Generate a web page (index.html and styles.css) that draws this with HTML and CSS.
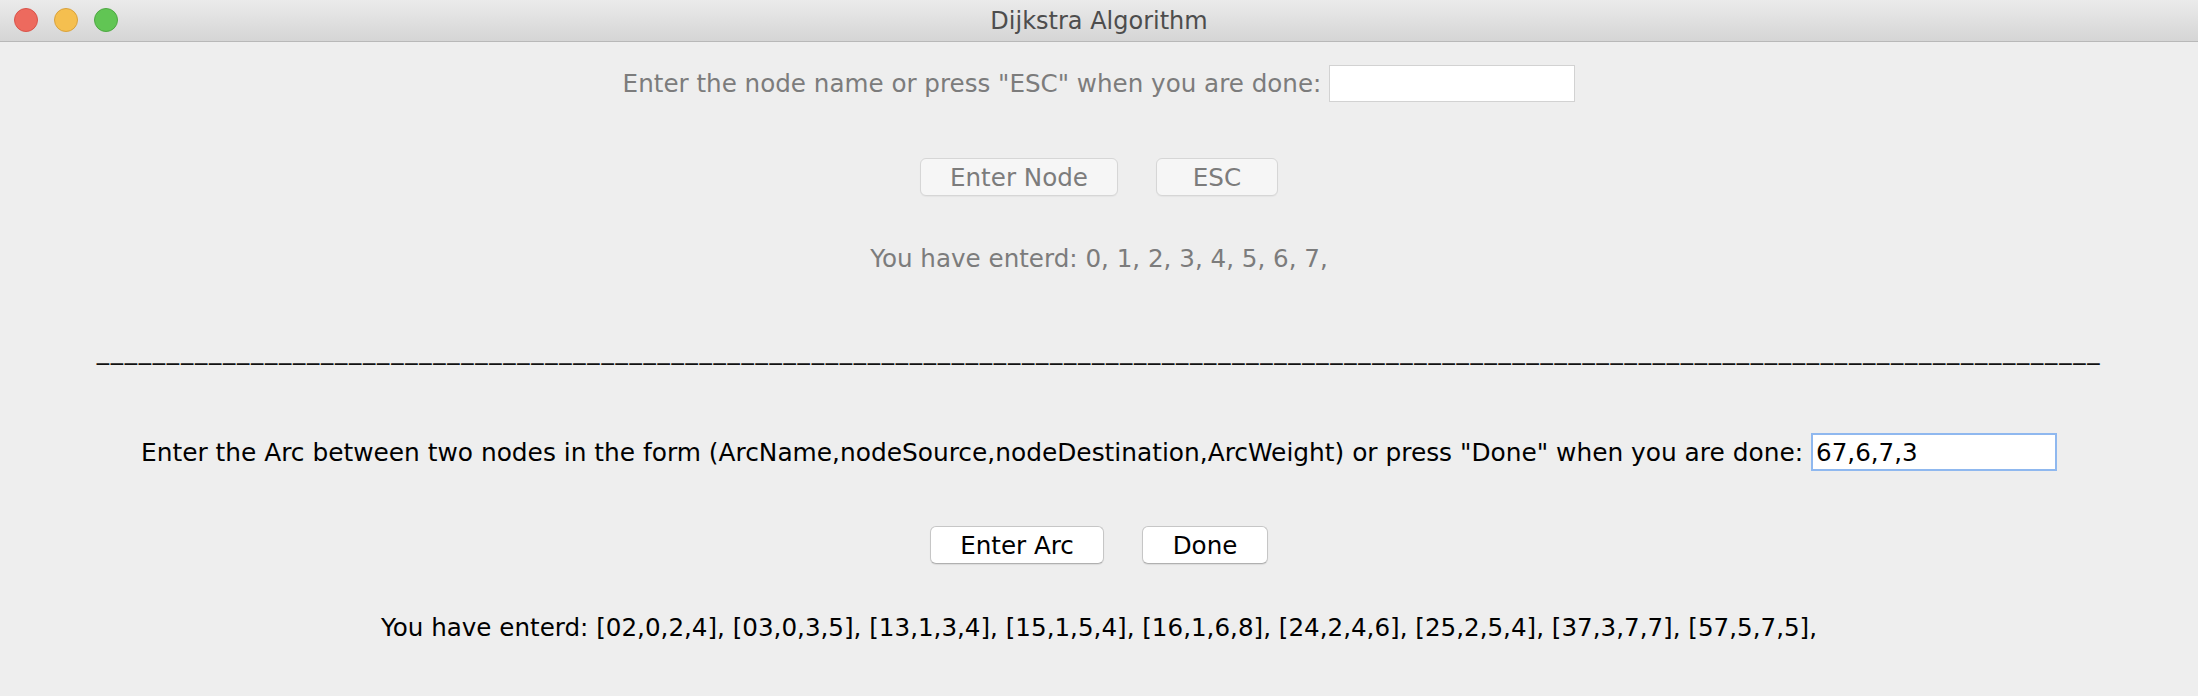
FILE: index.html
```html
<!DOCTYPE html>
<html>
<head>
<meta charset="utf-8">
<title>Dijkstra Algorithm</title>
<link rel="stylesheet" href="styles.css">
</head>
<body>
<div class="window">
  <div class="titlebar">
    <div class="lights">
      <span class="light red"></span>
      <span class="light yellow"></span>
      <span class="light green"></span>
    </div>
    <div class="title">Dijkstra Algorithm</div>
  </div>
  <div class="content">
    <div class="row row1 disabled">
      <span class="label">Enter the node name or press "ESC" when you are done:</span>
      <span class="field"></span>
    </div>
    <div class="row row2">
      <button class="btn btn-off btn-node">Enter Node</button>
      <button class="btn btn-off btn-esc">ESC</button>
    </div>
    <div class="row row3 disabled">
      <span class="label">You have enterd: 0, 1, 2, 3, 4, 5, 6, 7,</span>
    </div>
    <div class="row row4">
      <span class="sep">_______________________________________________________________________________________________________________________________________________</span>
    </div>
    <div class="row row5">
      <span class="label">Enter the Arc between two nodes in the form (ArcName,nodeSource,nodeDestination,ArcWeight) or press "Done" when you are done:</span>
      <span class="field focus">67,6,7,3</span>
    </div>
    <div class="row row6">
      <button class="btn btn-arc">Enter Arc</button>
      <button class="btn btn-done">Done</button>
    </div>
    <div class="row row7">
      <span class="label">You have enterd: [02,0,2,4], [03,0,3,5], [13,1,3,4], [15,1,5,4], [16,1,6,8], [24,2,4,6], [25,2,5,4], [37,3,7,7], [57,5,7,5],</span>
    </div>
  </div>
</div>
</body>
</html>
```

FILE: styles.css
```css
html, body {
  margin: 0;
  padding: 0;
  background: #eeeeee;
}
body {
  width: 2198px;
  height: 696px;
  overflow: hidden;
  font-family: "DejaVu Sans", "Liberation Sans", sans-serif;
  font-size: 24.6px;
  color: #000;
}
.window {
  display: flex;
  flex-direction: column;
  height: 696px;
}
.titlebar {
  height: 41px;
  border-bottom: 1px solid #b8b8b8;
  background: linear-gradient(#ebebeb, #d5d5d5);
  display: flex;
  align-items: center;
  justify-content: center;
  position: relative;
}
.lights {
  position: absolute;
  left: 14px;
  top: 8px;
  display: flex;
  gap: 16px;
}
.light {
  width: 24px;
  height: 24px;
  border-radius: 50%;
  box-sizing: border-box;
}
.red { background: #ed6a5e; border: 1px solid #d9534a; }
.yellow { background: #f5bf4f; border: 1px solid #d9a23d; }
.green { background: #61c554; border: 1px solid #4ea843; }
.title {
  font-family: "DejaVu Sans", sans-serif;
  font-size: 24px;
  color: #4d4d4d;
  padding-top: 1px;
}
.content {
  display: flex;
  flex-direction: column;
  align-items: center;
}
.row {
  display: flex;
  justify-content: center;
  align-items: center;
  width: 100%;
}
.disabled { color: #7c7c7c; }
.row1 { margin-top: 23px; height: 37px; gap: 8px; }
.row2 { margin-top: 56px; height: 38px; gap: 38px; }
.row3 { margin-top: 47px; height: 30px; }
.row4 { margin-top: 62px; height: 30px; }
.row5 { margin-top: 68px; height: 38px; gap: 8px; font-size: 24.85px; }
.row6 { margin-top: 55px; height: 38px; gap: 38px; }
.row7 { margin-top: 48px; height: 30px; }
.label { white-space: nowrap; }
.field {
  box-sizing: border-box;
  width: 246px;
  height: 37px;
  background: #fff;
  border: 1px solid #d2d2d2;
  display: flex;
  align-items: center;
  padding-left: 4px;
  color: #000;
  font-size: 24.6px;
}
.field.focus {
  height: 38px;
  border: 2px solid #8fb8ef;
  padding-left: 3px;
}
.btn {
  box-sizing: border-box;
  height: 38px;
  font-family: "DejaVu Sans", sans-serif;
  font-size: 24.6px;
  border-radius: 6px;
  padding: 0;
  margin: 0;
}
.btn-off {
  background: #f6f6f6;
  border: 1px solid #d6d6d6;
  color: #7c7c7c;
  box-shadow: 0 1px 1px rgba(0,0,0,0.04);
}
.btn-node { width: 198px; }
.btn-esc { width: 122px; }
.btn-arc { width: 174px; }
.btn-done { width: 126px; }
.btn-arc, .btn-done {
  background: #fff;
  border: 1px solid #c6c6c6;
  border-bottom-color: #b0b0b0;
  color: #000;
  box-shadow: 0 1px 1px rgba(0,0,0,0.08);
}
.sep {
  white-space: nowrap;
  letter-spacing: 1.72px;
  color: #111;
}
```
